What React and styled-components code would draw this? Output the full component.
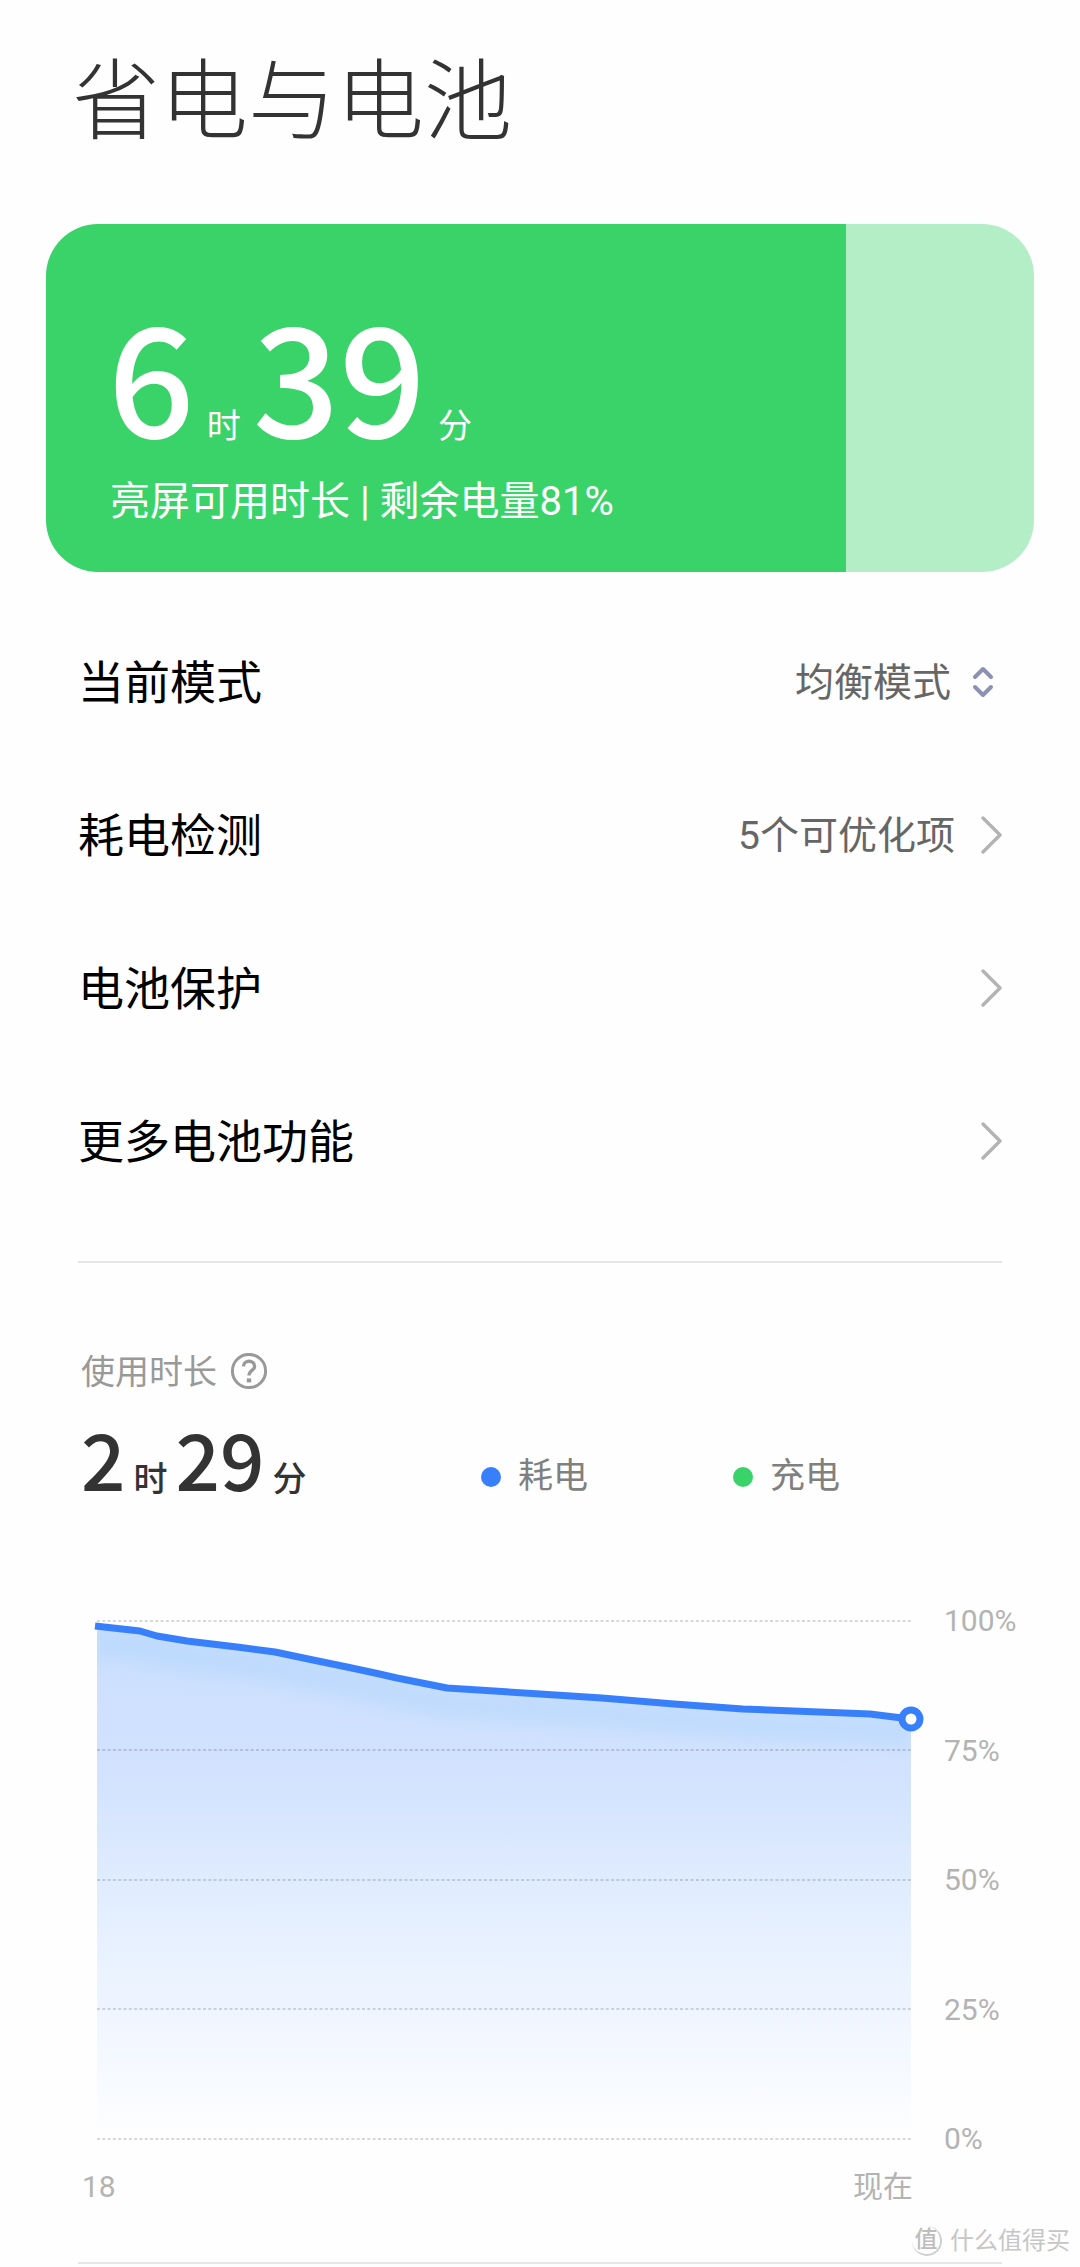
import React, { useState } from 'react'
import styled, { createGlobalStyle } from 'styled-components';

const GlobalStyle = createGlobalStyle`
* {
  box-sizing: border-box;
}
body {
  margin: 0;
  background: #fefefe;
  font-family: Roboto, "Noto Sans CJK SC", sans-serif;
}
`;

const Page = styled.main`
position: relative;
padding: 56px 0 2px;
overflow: hidden;
`;

const Title = styled.h1`
margin: 0 72px 76px;
font-size: 88px;
line-height: 92px;
font-weight: 300;
color: #333;
`;

const BatteryCard = styled.section`
margin: 0 46px 34px;
padding: 78px 64px 46px 62px;
border-radius: 52px;
color: #fff;
background: linear-gradient(
  to right,
  #3ad369 ${({ $level }) => $level}%,
  #b3eec6 ${({ $level }) => $level}%
);
`;

const Duration = styled.div`
display: flex;
align-items: baseline;
gap: ${({ $large }) => ($large ? '12px' : '8px')};
padding-left: ${({ $large }) => ($large ? '0' : '3px')};
font-weight: ${({ $large }) => ($large ? 400 : 500)};
font-size: 34px;
line-height: 40px;
`;

const Digits = styled.span`
font-family: "Noto Sans CJK SC", sans-serif;
font-weight: 500;
font-size: ${({ $large }) => ($large ? '152px' : '78px')};
line-height: ${({ $large }) => ($large ? '140px' : '60px')};
`;

const CardNote = styled.p`
margin: 32px 0 0 2px;
font-size: 40px;
line-height: 48px;
`;

const Settings = styled.div`
display: flex;
flex-direction: column;
margin: 0 78px 43px;
`;

const rowStyle = `
display: flex;
align-items: center;
gap: 17px;
height: 153px;
color: #000;
text-decoration: none;
`;

const SettingRow = styled.div`
${rowStyle}
`;

const SettingLink = styled.a`
${rowStyle}
`;

const RowTitle = styled.span`
flex: 1;
font-size: 46px;
line-height: 56px;
`;

const RowValue = styled.span`
font-size: 39px;
line-height: 48px;
color: #666;
`;

const ModeSelect = styled.select`
appearance: none;
field-sizing: content;
padding: 0;
border: 0;
background: transparent;
font-family: inherit;
font-size: 39px;
line-height: 48px;
color: #666;
`;

const Divider = styled.hr`
height: 2px;
margin: 0 78px;
border: 0;
background: #e6e6e6;
`;

const Usage = styled.section`
padding: 85px 64px 60px 78px;
`;

const UsageTitle = styled.h2`
display: flex;
align-items: center;
gap: 13px;
margin: 0 0 31px 3px;
font-size: 34px;
line-height: 48px;
font-weight: 400;
color: #999;
`;

const HelpButton = styled.button`
display: flex;
padding: 0;
border: 0;
background: transparent;
color: #999;
`;

const Summary = styled.div`
display: grid;
grid-template-columns: 403fr 252fr 283fr;
align-items: end;
margin-bottom: 107px;
color: #333;
`;

const LegendItem = styled.span`
display: flex;
align-items: center;
gap: 17px;
font-size: 35px;
line-height: 44px;
color: #808080;
`;

const Dot = styled.i`
width: 20px;
height: 20px;
border-radius: 50%;
background: ${({ $color }) => $color};
`;

const Chart = styled.div`
display: flex;
gap: 19px;
`;

const Plot = styled.svg`
display: block;
flex: 1;
min-width: 0;
height: auto;
`;

const Levels = styled.div`
display: flex;
flex-direction: column;
justify-content: space-between;
width: 72px;
font-size: 30px;
line-height: 30px;
color: #b3b3b3;
`;

const Times = styled.div`
display: flex;
justify-content: space-between;
margin: 18px 103px 0 4px;
font-size: 30px;
line-height: 30px;
color: #b3b3b3;
`;

const Watermark = styled.div`
position: absolute;
right: 10px;
bottom: 10px;
display: flex;
align-items: center;
gap: 8px;
font-size: 24px;
line-height: 30px;
color: #c6c6c6;
`;

const Seal = styled.span`
width: 30px;
height: 30px;
border-right: 2px solid #cfcfcf;
border-bottom: 2px solid #cfcfcf;
border-radius: 50%;
font-size: 23px;
line-height: 28px;
font-weight: 500;
text-align: center;
color: #bdbdbd;
`;

const LINE = [
  [17, 20], [62, 25], [79, 30], [109, 35], [159, 41], [197, 46], [235, 54],
  [269, 61], [297, 67], [319, 72], [369, 82], [462, 88], [524, 92],
  [596, 98], [665, 103], [792, 108], [824, 112], [833, 113],
];

const GRID = [15, 144, 274, 403, 533];

const ChevronRight = () => (
  <svg width="30" height="40" viewBox="0 0 30 40" fill="none" aria-hidden="true">
    <path d="M11 2 L28 19 L11 36" stroke="#b3b3b3" strokeWidth="3.4" strokeLinecap="round" strokeLinejoin="round" />
  </svg>
);

const UpDown = () => (
  <svg width="34" height="40" viewBox="0 0 34 40" fill="none" aria-hidden="true">
    <path d="M7 14 L15 6 L23 14 M7 24 L15 32 L23 24" stroke="#8c90b2" strokeWidth="4" strokeLinecap="round" strokeLinejoin="round" />
  </svg>
);

const HelpIcon = () => (
  <svg width="38" height="38" viewBox="0 0 38 38" fill="none" stroke="currentColor" aria-hidden="true">
    <circle cx="19" cy="18" r="16.6" strokeWidth="3" />
    <path d="M13.4 13.4 C13.6 6.6 24.6 6.6 24.6 13.4 C24.6 17.2 19 17.6 19 22.6" strokeWidth="3.4" />
    <path d="M19 25.4 V29.4" strokeWidth="4.4" />
  </svg>
);

const BatteryChart = () => {
  const points = LINE.map((p) => p.join(' ')).join(' L');
  const area = `M19 20 L${LINE.slice(1).map((p) => p.join(' ')).join(' L')} V533 H19 Z`;
  return (
    <Plot viewBox="0 0 847 548" fill="none" role="img" aria-label="电量变化">
      <defs>
        <linearGradient id="fill" gradientUnits="userSpaceOnUse" x1="0" y1="20" x2="0" y2="533">
          <stop offset="0" stopColor="#c9deff" />
          <stop offset="0.3" stopColor="#d3e3fe" />
          <stop offset="0.6" stopColor="#e6f0ff" />
          <stop offset="1" stopColor="#fefeff" />
        </linearGradient>
        <clipPath id="area">
          <path d={area} />
        </clipPath>
        <filter id="soft" x="-10%" y="-50%" width="120%" height="200%">
          <feGaussianBlur stdDeviation="8" />
        </filter>
      </defs>
      <path d={area} fill="url(#fill)" />
      <g clipPath="url(#area)">
        <path d={`M${points}`} transform="translate(0 16)" stroke="#a9d3fb" strokeOpacity="0.4" strokeWidth="28" filter="url(#soft)" />
      </g>
      {GRID.map((y) => (
        <path key={y} d={`M19 ${y} H835`} stroke="#000" strokeOpacity="0.2" strokeWidth="1.6" strokeDasharray="3 2.3" />
      ))}
      <path d={`M${points}`} stroke="#3880fb" strokeWidth="7" strokeLinejoin="round" />
      <circle cx="833" cy="113" r="9" fill="#fff" stroke="#3880fb" strokeWidth="7" />
    </Plot>
  );
};

const App = () => {
  const [mode, setMode] = useState('均衡模式');
  return <>
  <GlobalStyle />
  <Page>
    <Title>省电与电池</Title>
    <BatteryCard $level={81}>
      <Duration $large>
        <Digits $large>6</Digits>时
        <Digits $large>39</Digits>分
      </Duration>
      <CardNote>亮屏可用时长 | 剩余电量81%</CardNote>
    </BatteryCard>
    <Settings>
      <SettingRow>
        <RowTitle as="label" htmlFor="mode">当前模式</RowTitle>
        <ModeSelect id="mode" value={mode} onChange={(e) => setMode(e.target.value)}>
          <option>均衡模式</option>
          <option>省电模式</option>
          <option>性能模式</option>
        </ModeSelect>
        <UpDown />
      </SettingRow>
      <SettingLink href="#check">
        <RowTitle>耗电检测</RowTitle>
        <RowValue>5个可优化项</RowValue>
        <ChevronRight />
      </SettingLink>
      <SettingLink href="#protect">
        <RowTitle>电池保护</RowTitle>
        <ChevronRight />
      </SettingLink>
      <SettingLink href="#more">
        <RowTitle>更多电池功能</RowTitle>
        <ChevronRight />
      </SettingLink>
    </Settings>
    <Divider />
    <Usage>
      <UsageTitle>
        使用时长
        <HelpButton type="button" aria-label="使用时长说明"><HelpIcon /></HelpButton>
      </UsageTitle>
      <Summary>
        <Duration>
          <Digits>2</Digits>时
          <Digits>29</Digits>分
        </Duration>
        <LegendItem><Dot $color="#3880fb" />耗电</LegendItem>
        <LegendItem><Dot $color="#3ad369" />充电</LegendItem>
      </Summary>
      <Chart>
        <BatteryChart />
        <Levels>
          <span>100%</span>
          <span>75%</span>
          <span>50%</span>
          <span>25%</span>
          <span>0%</span>
        </Levels>
      </Chart>
      <Times>
        <span>18</span>
        <span>现在</span>
      </Times>
    </Usage>
    <Divider />
    <Watermark><Seal>值</Seal>什么值得买</Watermark>
  </Page>
  </>
}

export default App
